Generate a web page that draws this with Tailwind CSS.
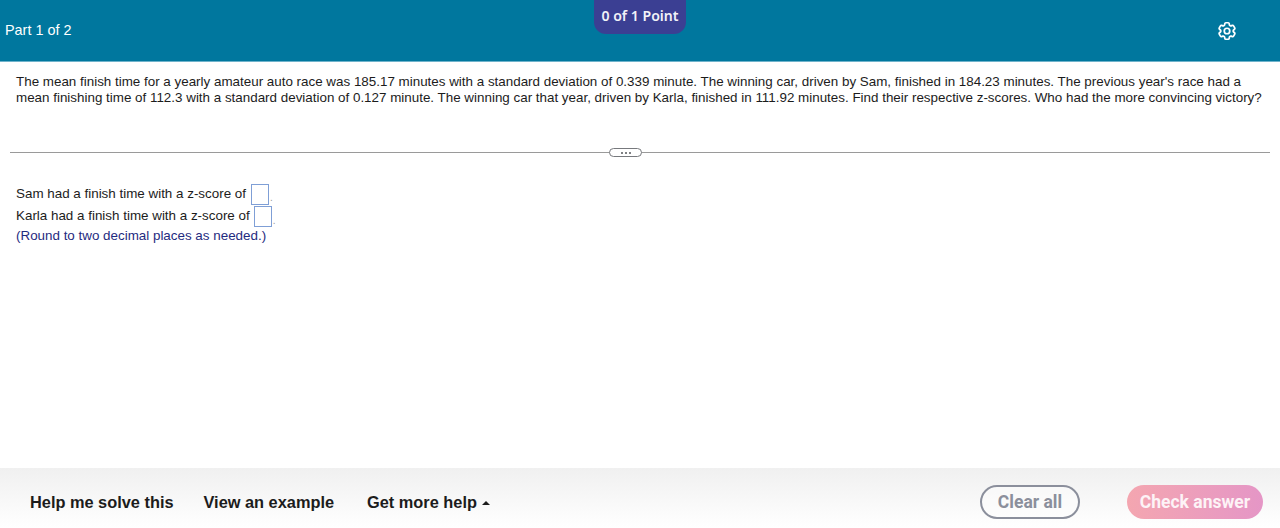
<!DOCTYPE html>
<html lang="en">
<head>
    <meta charset="UTF-8">
    <title>Part 1 of 2</title>
    <script src="https://cdn.jsdelivr.net/npm/@tailwindcss/browser@4"></script>
</head>
<body class="bg-white font-['Liberation_Sans',Arial,sans-serif] h-[528px] w-[1280px] overflow-hidden flex flex-col">
    <!-- top bar -->
    <header class="relative h-[62px] shrink-0 bg-[#00779e] border-b border-[#6fb3cb] text-white flex items-center justify-between pl-[5px] pr-[42px]">
        <span class="text-[14.4px]">Part 1 of 2</span>
        <div class="absolute top-0 left-[594px] w-[92px] h-[34px] rounded-b-[12px] bg-[#3b3f93] flex items-center justify-center font-['Noto_Sans',sans-serif] font-semibold text-[14.1px] pb-[3px] text-[#f2f2f8]">0 of 1 Point</div>
        <svg class="w-[22px] h-[22px]" viewBox="0 0 24 24" fill="none" stroke="currentColor" stroke-width="1.9" stroke-linejoin="round">
            <path d="M9.594 3.94c.09-.542.56-.94 1.11-.94h2.593c.55 0 1.02.398 1.11.94l.213 1.281c.063.374.313.686.645.87.074.04.147.083.22.127.325.196.72.257 1.075.124l1.217-.456a1.125 1.125 0 0 1 1.37.49l1.296 2.247a1.125 1.125 0 0 1-.26 1.431l-1.003.827c-.293.241-.438.613-.43.992a7.723 7.723 0 0 1 0 .255c-.008.378.137.75.43.991l1.004.827c.424.35.534.955.26 1.43l-1.298 2.247a1.125 1.125 0 0 1-1.369.491l-1.217-.456c-.355-.133-.75-.072-1.076.124a6.47 6.47 0 0 1-.22.128c-.331.183-.581.495-.644.869l-.213 1.281c-.09.543-.56.94-1.11.94h-2.594c-.55 0-1.019-.398-1.11-.94l-.213-1.281c-.062-.374-.312-.686-.644-.87a6.52 6.52 0 0 1-.22-.127c-.325-.196-.72-.257-1.076-.124l-1.217.456a1.125 1.125 0 0 1-1.369-.49l-1.297-2.247a1.125 1.125 0 0 1 .26-1.431l1.004-.827c.292-.24.437-.613.43-.991a6.932 6.932 0 0 1 0-.255c.007-.38-.138-.751-.43-.992l-1.004-.827a1.125 1.125 0 0 1-.26-1.43l1.297-2.247a1.125 1.125 0 0 1 1.37-.491l1.216.456c.356.133.751.072 1.076-.124.072-.044.146-.086.22-.128.332-.183.582-.495.644-.869l.214-1.28Z"/>
            <circle cx="12" cy="12" r="3"/>
        </svg>
    </header>

    <main class="flex-1 min-h-0">
        <p class="pt-[12px] pl-[16px] pr-[10px] text-[13.4px] leading-[16px] text-[#1c1c1c] h-[78px]">The mean finish time for a yearly amateur auto race was 185.17 minutes with a standard deviation of 0.339 minute. The winning car, driven by Sam, finished in 184.23 minutes. The previous year's race had a mean finishing time of 112.3 with a standard deviation of 0.127 minute. The winning car that year, driven by Karla, finished in 111.92 minutes. Find their respective z-scores. Who had the more convincing victory?</p>

        <!-- divider -->
        <div class="relative mx-[10px] mt-[12px] h-px bg-[#9a9a9a]">
            <div class="absolute left-[599px] top-[-4px] w-[33px] h-[9px] rounded-full border border-[#77797d] bg-white flex items-center justify-center gap-[2px]">
                <span class="w-[2px] h-[2px] rounded-full bg-[#55575b]"></span>
                <span class="w-[2px] h-[2px] rounded-full bg-[#55575b]"></span>
                <span class="w-[2px] h-[2px] rounded-full bg-[#55575b]"></span>
            </div>
        </div>

        <div class="mt-[30px] pl-[16px] text-[13.4px] text-[#1c1c1c]">
            <div class="flex items-center h-[22px] gap-[5px]">
                <span>Sam had a finish time with a z-score of</span>
                <span class="w-[18px] h-[21px] border border-[#7f9fd6] bg-white"></span>
                <span class="text-[#9a9a9a] self-end text-[10px] -ml-[4px]">.</span>
            </div>
            <div class="flex items-center h-[23px] gap-[4px]">
                <span>Karla had a finish time with a z-score of</span>
                <span class="w-[18px] h-[21px] border border-[#7f9fd6] bg-white"></span>
                <span class="text-[#9a9a9a] self-end text-[10px] -ml-[3px]">.</span>
            </div>
            <p class="text-[#1f2b80] leading-[15px]">(Round to two decimal places as needed.)</p>
        </div>
    </main>

    <!-- footer -->
    <footer class="h-[60px] shrink-0 bg-gradient-to-b from-[#f0f0f0] to-white flex items-center pl-[30px] pr-[17px] pt-[8px] text-[16.35px] font-bold text-[#1c1c1c]">
        <span>Help me solve this</span>
        <span class="ml-[30px]">View an example</span>
        <span class="ml-[33px] flex items-center gap-[5px]">Get more help
            <svg class="w-[8px] h-[4px] mt-[3px]" viewBox="0 0 8 4"><path d="M0 4 4 0l4 4z" fill="#1c1c1c"/></svg>
        </span>
        <button class="ml-auto w-[100px] h-[34px] rounded-full border-2 border-[#8b8f9c] text-[#8b8f9c] font-['Roboto',sans-serif] text-[17.5px] font-bold bg-white/40">Clear all</button>
        <button class="ml-[47px] w-[136px] h-[34px] rounded-full bg-gradient-to-r from-[#f4a6b0] to-[#e596c6] text-[#fdf3f6] font-['Roboto',sans-serif] text-[17.5px] font-bold">Check answer</button>
    </footer>
</body>
</html>
